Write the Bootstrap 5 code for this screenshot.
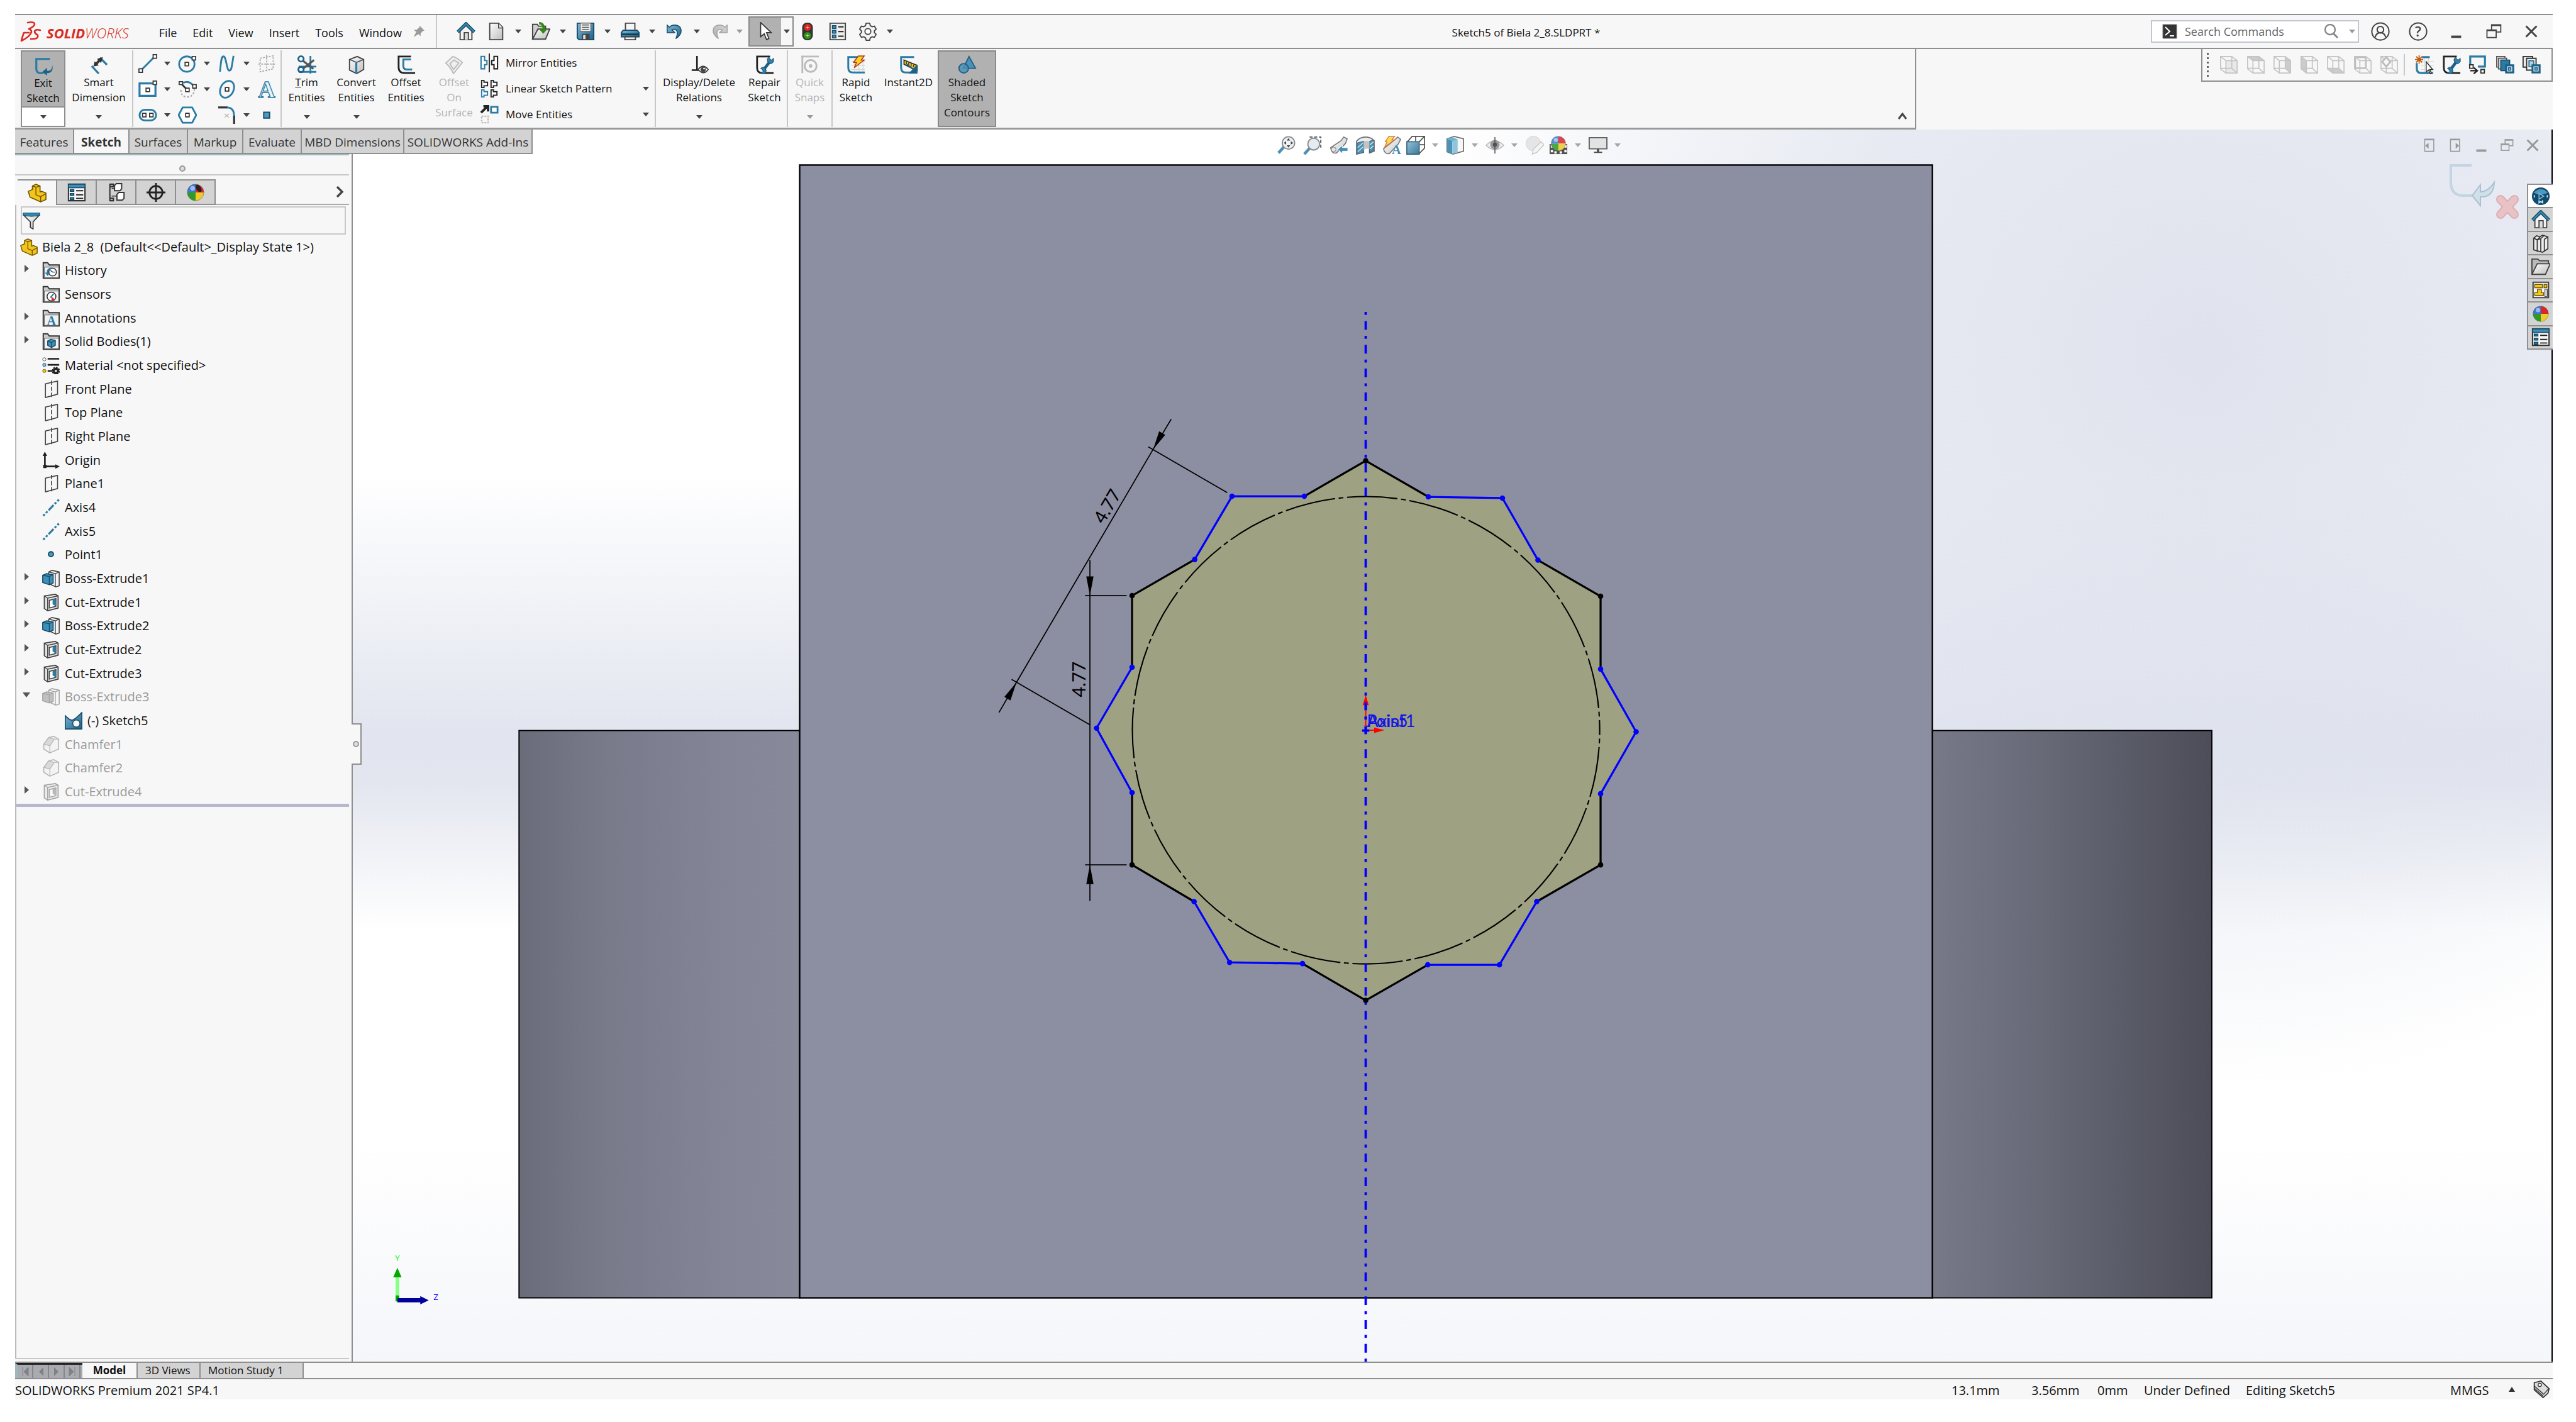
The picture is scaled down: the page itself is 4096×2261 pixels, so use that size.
<!DOCTYPE html>
<html lang="en">
<head>
<meta charset="utf-8">
<meta name="viewport" content="width=device-width, initial-scale=1">
<title>Sketch5 of Biela 2_8.SLDPRT *</title>
<link href="https://cdn.jsdelivr.net/npm/bootstrap@5.3.0/dist/css/bootstrap.min.css" rel="stylesheet">
<style>
:root{--line:#8f8f8f;--face:#f7f7f7;--tab:#d3d3d3;--ink:#111;--teal:#9db8bd}
body{font-family:"Open Sans","Noto Sans",sans-serif;font-size:18px;line-height:24px;color:var(--ink);background:#fff;padding:22px 37px 36px 24px}
button{font:inherit;color:inherit;background:none;border:0;padding:0}
svg{display:block;flex:none}
.ic{width:30px;height:30px}
.ic28{width:28px;height:28px}
.dn{display:block;width:0;height:0;border:5px solid transparent;border-top:6px solid #444;border-bottom:0}
.dim{color:#b4b4b4}
.dim .dn{border-top-color:#999}
.off{filter:grayscale(1);opacity:.45}
.vr1{width:2px;background:#c8c8c8;align-self:stretch}

.titlebar{height:56px;background:var(--face);border-top:2px solid var(--line);border-bottom:2px solid var(--line)}
.brand{font-size:22px;font-style:italic;color:#da2b23}
.brand b{font-weight:700}.brand span{font-weight:300}
.menus{gap:25px}
.menus a{color:var(--ink);text-decoration:none}
.qbtn{width:36px;height:48px}
.qhome{margin-right:12px}
.qdrop{width:35px;height:48px}
.qlast{width:28px}
.pick{height:48px;border:2px solid #8a8a8a}
.pick .on{width:50px;background:#b1b1b1}
.pick .dd{width:18px}
.docname{font-size:17px}
.find{width:331px;height:36px;border:2px solid #c3c5d2;background:#fff}
.find input{font-size:18px;border:0;outline:0;min-width:0;color:#555;background:none}
.find input::placeholder{color:#666;opacity:1}
.wbtn{width:60px;height:48px}

.ribbonrow{height:128px;background:var(--face)}
.ribbon{width:3023px;border-right:2px solid var(--line);border-bottom:3px solid #999;font-size:17px;padding:2px 0 1px 9px}
.big{padding-top:8px;position:relative;line-height:24px}
.big .dn{position:absolute;left:50%;bottom:13px;margin-left:-5px}
.big .ic{margin-bottom:1px}
.w71{width:71px}.w69{width:69px}.w74{width:74px}.w79{width:79px}.w93{width:93px}.w106{width:106px}.w137{width:137px}
.split{border:2px solid #8f8f8f;background:#fff;padding:0}
.split .up{background:#b1b1b1;height:89px;border-bottom:2px solid #8f8f8f;padding-top:6px}
.pressed{background:#b1b1b1;border:2px solid #8a8a8a;padding-top:6px}
.tools{display:grid;grid-template-columns:31px 32px 31px 32px 31px 32px 31px;grid-auto-rows:41px;place-items:center;padding:0 7px}
.ents{width:282px;padding-left:4px}
.ents button{height:41px;gap:11px;text-align:left}
.ents .dn{margin-right:9px}
.viewbar{width:559px;height:52px;border:2px solid var(--line);border-top:0;padding:0 17px 0 6px}
.skgroup{width:200px}
.grip{width:5px;height:42px;background:radial-gradient(circle,#666 2px,transparent 2px) 0 0/5px 7px}

.side{width:537px;z-index:2}
.cmtabs{height:39px;width:max-content;font-size:19px;border-bottom:2px solid var(--line)}
.cmtabs button{background:var(--tab);border-right:2px solid var(--line);color:#333;white-space:nowrap;padding-top:3px}
.cmtabs .cur{background:var(--face);font-weight:700}
.t88{width:88px}.t94{width:94px}.t93{width:93px}.t163{width:163px}.t204{width:204px}
.panel{background:var(--face);border-right:2px solid var(--line)}
.ptop{height:34px;margin-right:4px;border-bottom:2px solid #c8c8c8;border-top:2px solid var(--teal)}
.knob{width:10px;height:10px;border-radius:50%;border:2px solid #999;background:#ddd}
.ptabs{height:41px;margin:6px 4px 0 4px;border-bottom:2px solid #aaa}
.ptabs .pt{width:63px;height:41px;background:var(--tab);border:2px solid var(--line);border-left:0}
.ptabs .cur{background:var(--face);border-bottom:0}
.tbody1{border-left:2px solid #bbb;margin-right:4px}
.filter{height:45px;margin:2px 5px 0 7px;border:2px solid #c8c8c8;padding-left:1px}
.filter input{border:0;outline:0;background:none;min-width:0}
.tree{display:grid;grid-auto-rows:1fr;height:909px;margin:1px 0 0;font-size:20px;border-bottom:5px solid #b7b8cf}
.tree li{display:flex;align-items:center;gap:8px;padding-left:9px;white-space:pre}
.tree li.root{padding-left:6px;gap:7px}
.tree li.kid{padding-left:77px}
.tw{width:24px;height:12px;margin-top:-6px}
.tree .gone{color:#999}
.pfoot{height:6px;border-top:2px solid #c8c8c8;margin-right:4px}

.stage{background:
 radial-gradient(ellipse 36% 60% at 84% 18%,rgba(220,224,235,.9),rgba(222,226,237,.7) 50%,rgba(225,229,239,0)),
 linear-gradient(#fff 0,#fff 28%,#e2e5ef 49%,#e3e6ef 53%,#fff 65%,#fff 82%,#f5f6fa 100%);
 border-right:2px solid #000}
.stage>svg.scene{position:absolute;inset:0;width:100%;height:100%}
.hud{position:absolute;top:10px;left:0;right:0;opacity:.85}
.hud .hd{width:33px;height:30px}
.hud .dn{border-top-color:#999}
.docbtns{position:absolute;top:10px;right:15px;gap:11px}
.docbtns,.wins{color:#444}
.docbtns{color:#999}
.corner{position:absolute;top:54px;right:49px}
.taskpane{position:absolute;top:86px;right:-2px;width:41px;height:264px;border:2px solid var(--line);border-right:0}
.taskpane button{background:var(--tab);border-bottom:2px solid var(--line);flex:1}
.taskpane button:first-child{background:#fff}
.taskpane button:last-child{border-bottom:0}
.pull{position:absolute;top:944px;left:-2px;width:16px;height:66px;background:var(--face);border:2px solid var(--line);border-left:0;z-index:3}

.btabs{height:28px;background:var(--face);border-top:2px solid var(--line);border-bottom:2px solid var(--line);font-size:17px;line-height:22px}
.vcr{background:#a9abb1;border-top:3px solid #222;border-left:4px solid var(--teal);width:107px}
.vcr button{width:25px;border-right:2px solid #85878c}
.bt{background:var(--tab);border-right:2px solid var(--line);text-align:left}
.bt.cur{background:var(--face);font-weight:700;text-align:center}
.b100{width:100px}.b164{width:164px}
.status{height:32px;background:var(--face);font-size:20px;line-height:35px;white-space:nowrap}
.s127{width:127px}.s105{width:105px}.s162{width:162px}.s325{width:325px}.s80{width:80px}
</style>
</head>
<body class="d-flex flex-column min-vh-100">

<svg width="0" height="0" class="position-absolute" aria-hidden="true">
<defs>
<linearGradient id="gb" x1="0" y1="0" x2="1" y2="1"><stop offset="0" stop-color="#7db9d6"/><stop offset="1" stop-color="#1d6288"/></linearGradient>
<linearGradient id="gg" x1="0" y1="0" x2="1" y2="1"><stop offset="0" stop-color="#fff"/><stop offset="1" stop-color="#bdbdbd"/></linearGradient>
<linearGradient id="gl" x1="0" y1="0" x2="1" y2="0"><stop offset="0" stop-color="#6a6c7a"/><stop offset=".3" stop-color="#787a8a"/><stop offset=".7" stop-color="#838597"/><stop offset="1" stop-color="#888a9c"/></linearGradient>
<linearGradient id="gr" x1="0" y1="0" x2="1" y2="0"><stop offset="0" stop-color="#777989"/><stop offset=".4" stop-color="#676977"/><stop offset="1" stop-color="#4c4d58"/></linearGradient>

<symbol id="home" viewBox="0 0 32 32"><path d="M6 15v15h20V15L16 6z" fill="#f2f2f2" stroke="#444" stroke-width="2"/><path d="M13 30V18h7v12" fill="#ddd" stroke="#444" stroke-width="2"/><path d="M2 17L16 3l14 14" fill="none" stroke="#174a66" stroke-width="5.5"/><path d="M2 17L16 3l14 14" fill="none" stroke="#3a8cb5" stroke-width="2.5"/></symbol>
<symbol id="new" viewBox="0 0 32 32"><path d="M5 2h15l7 7v21H5z" fill="url(#gg)" stroke="#444" stroke-width="2"/><path d="M20 2v8h7" fill="#eee" stroke="#444" stroke-width="1.6"/></symbol>
<symbol id="open" viewBox="0 0 32 32"><path d="M2 29V4h8l2 3h12v5" fill="#d0d0d0" stroke="#444" stroke-width="2"/><path d="M2 29l9-17h20l-7 17z" fill="url(#gg)" stroke="#444" stroke-width="2"/><path d="M13 2c6 0 8 4 8 11" fill="none" stroke="#338a12" stroke-width="4"/><path d="M13 12h14l-7 8z" fill="#338a12"/></symbol>
<symbol id="save" viewBox="0 0 32 32"><path d="M2 2h28v28H5l-3-3z" fill="url(#gb)" stroke="#174a66" stroke-width="2"/><path d="M7 2h18v14H7z" fill="#eee" stroke="#444"/><path d="M10 5h12M10 9h12M10 13h12" stroke="#555" stroke-width="1.6"/><path d="M10 20h13v10H10z" fill="#444"/><path d="M12 22h4v7h-4z" fill="#ddd"/></symbol>
<symbol id="print" viewBox="0 0 32 32"><path d="M8 2h16v13H8z" fill="#f5f5f5" stroke="#444" stroke-width="2"/><path d="M4 14h24l3 4v7H1v-7z" fill="url(#gb)" stroke="#174a66" stroke-width="2"/><path d="M2 21h28" stroke="#0f3d57" stroke-width="3"/><path d="M7 25h18v5H7z" fill="#eee" stroke="#444" stroke-width="2"/></symbol>
<symbol id="undo" viewBox="0 0 32 32"><path d="M3 5v13h13l-5-5c8-2 12 2 7 15 12-8 12-22-2-23-5 0-7 1-9 4z" fill="url(#gb)" stroke="#174a66" stroke-width="1.6" stroke-linejoin="round"/></symbol>
<symbol id="cursor" viewBox="0 0 32 32"><path d="M8 1v24l6-5 4 10 4-2-4-10h8z" fill="#fff" stroke="#333" stroke-width="1.8"/></symbol>
<symbol id="traffic" viewBox="0 0 32 32"><rect x="7" y="1" width="18" height="30" rx="8" fill="#333"/><circle cx="16" cy="9" r="6" fill="#d9251d"/><circle cx="16" cy="23" r="6" fill="#2f9416"/><path d="M13 9h6M16 6v6M13 23h6M16 20v6" stroke="#fff" stroke-opacity=".6"/></symbol>
<symbol id="list" viewBox="0 0 32 32"><path d="M3 2h26v28H3z" fill="#eee" stroke="#444" stroke-width="2"/><path d="M7 6h6v5H7zM7 14h6v5H7zM7 22h6v5H7z" fill="#3e8fb8" stroke="#174a66" stroke-width="1.6"/><path d="M17 8h9M17 16h9M17 24h9" stroke="#333" stroke-width="2.4"/></symbol>
<symbol id="gear" viewBox="0 0 32 32"><path d="M13 2h6l1 4 3 2 4-1 3 5-3 3v3l3 3-3 5-4-1-3 2-1 4h-6l-1-4-3-2-4 1-3-5 3-3v-3l-3-3 3-5 4 1 3-2z" fill="#f4f4f4" stroke="#444" stroke-width="2" stroke-linejoin="round"/><circle cx="16" cy="16" r="5" fill="#fff" stroke="#444" stroke-width="2"/></symbol>
<symbol id="pin" viewBox="0 0 32 32"><path d="M18 3l11 11-4 1-5 6 0 6-5-5L4 29l6-12-6-5 7 0 6-5z" fill="#9a9a9a"/></symbol>
<symbol id="exit" viewBox="0 0 32 32"><path d="M27 4H4v17q0 7 8 7h4" fill="none" stroke="#2a7ba5" stroke-width="3.4"/><path d="M31 14c0 10-5 10-9 10v-5l-8 7 8 6v-4c8 0 11-5 9-14z" fill="#1d6288"/></symbol>
<symbol id="dimn" viewBox="0 0 32 32"><path d="M18 4l12 12M4 18l12 13" stroke="#2a7ba5" stroke-width="3.4"/><path d="M7 19l2-9 2 2 4-4-2-2 10-3-3 10-2-2-4 4 2 2z" fill="#333"/></symbol>
<symbol id="ln" viewBox="0 0 32 32"><path d="M4 28L28 4" stroke="#2a7ba5" stroke-width="3.2"/><path d="M1 25h6v6H1zM25 1h6v6h-6z" fill="#fff" stroke="#333" stroke-width="1.8"/></symbol>
<symbol id="circ" viewBox="0 0 32 32"><circle cx="15" cy="17" r="13" fill="none" stroke="#2a7ba5" stroke-width="3"/><path d="M12 14h6v6h-6zM24 4h6v6h-6z" fill="#fff" stroke="#333" stroke-width="1.8"/></symbol>
<symbol id="spl" viewBox="0 0 32 32"><path d="M4 30C6 12 6 4 10 4c5 0 5 24 10 24 4 0 4-8 7-25" fill="none" stroke="#2a7ba5" stroke-width="3"/></symbol>
<symbol id="pdash" viewBox="0 0 32 32"><path d="M5 7L27 3v22L5 30zM16 1v30M2 17h28" fill="none" stroke="#aaa" stroke-width="1.8" stroke-dasharray="3 2"/></symbol>
<symbol id="rct" viewBox="0 0 32 32"><path d="M2 6h27v21H2z" fill="#fff" stroke="#2a7ba5" stroke-width="3.4"/><path d="M13 14h6v6h-6zM25 2h6v6h-6z" fill="#fff" stroke="#333" stroke-width="1.8"/></symbol>
<symbol id="arc" viewBox="0 0 32 32"><path d="M9 5q10-5 18 6" fill="none" stroke="#2a7ba5" stroke-width="3"/><path d="M5 17q0 12 11 12t12-14" fill="none" stroke="#aaa" stroke-width="2.4" stroke-dasharray="3 3"/><path d="M5 6l11 11" stroke="#333" stroke-width="3"/><path d="M2 3h6v5H2zM13 14h6v6h-6zM25 8h6v6h-6z" fill="#fff" stroke="#333" stroke-width="1.8"/></symbol>
<symbol id="ell" viewBox="0 0 32 32"><ellipse cx="16" cy="16" rx="11" ry="15" transform="rotate(28 16 16)" fill="none" stroke="#2a7ba5" stroke-width="3"/><path d="M13 13h6v6h-6z" fill="#fff" stroke="#333" stroke-width="1.8"/></symbol>
<symbol id="txt" viewBox="0 0 32 32"><text x="16" y="30" text-anchor="middle" font-family="Liberation Serif,serif" font-weight="700" font-size="40" fill="#e8f2f8" stroke="#2a7ba5" stroke-width="1.4">A</text></symbol>
<symbol id="slot" viewBox="0 0 32 32"><rect x="2" y="7" width="28" height="18" rx="9" fill="#fff" stroke="#2a7ba5" stroke-width="3.2"/><path d="M7 13h6v6H7zM19 13h6v6h-6z" fill="#fff" stroke="#333" stroke-width="1.8"/></symbol>
<symbol id="poly" viewBox="0 0 32 32"><path d="M8 3h16l7 13-7 13H8L1 16z" fill="#fff" stroke="#2a7ba5" stroke-width="3"/><path d="M13 13h6v6h-6z" fill="#fff" stroke="#333" stroke-width="1.8"/></symbol>
<symbol id="fil" viewBox="0 0 32 32"><path d="M1 3h16" stroke="#333" stroke-width="3.4"/><path d="M16 3q12 0 12 15" fill="none" stroke="#2a7ba5" stroke-width="3"/><path d="M28 17v14" stroke="#333" stroke-width="3.4"/><path d="M12 14l7 6M19 14l-7 6" stroke="#bbb" stroke-width="1.6"/></symbol>
<symbol id="pnt" viewBox="0 0 32 32"><path d="M11 11h10v10H11z" fill="#4a9ac2" stroke="#174a66" stroke-width="2"/></symbol>
<symbol id="trim" viewBox="0 0 32 32"><path d="M22 1v30M2 28h30M2 19h30" stroke="#2a7ba5" stroke-width="3"/><path d="M9 9l18 14M9 23L28 8" stroke="#555" stroke-width="3.4"/><circle cx="6" cy="6" r="4.5" fill="none" stroke="#1d6288" stroke-width="3"/><circle cx="6" cy="24" r="4.5" fill="none" stroke="#1d6288" stroke-width="3"/></symbol>
<symbol id="conv" viewBox="0 0 32 32"><path d="M4 7l13-5 11 5v17l-12 7-12-6z" fill="url(#gg)" stroke="#444" stroke-width="2"/><path d="M4 7l12 5 12-5" fill="none" stroke="#444" stroke-width="1.6"/><path d="M15.500 12v19" stroke="#2a7ba5" stroke-width="3.4"/></symbol>
<symbol id="offs" viewBox="0 0 32 32"><path d="M24 2H3v18q0 10 10 10h18" fill="none" stroke="#222" stroke-width="3"/><path d="M24 7H11v11q0 6 6 6h9" fill="none" stroke="#2a7ba5" stroke-width="3.2"/></symbol>
<symbol id="osrf" viewBox="0 0 32 32"><path d="M2 13L14 2q7 2 16 10L15 31Q10 20 2 13zM9 14l7-6 8 5-9 11z" fill="#f0f0f0" stroke="#bbb" stroke-width="2"/></symbol>
<symbol id="mir" viewBox="0 0 32 32"><path d="M16 0v32" stroke="#222" stroke-width="2"/><path d="M2 5h6v7h4v7H8v7H2z" fill="#fff" stroke="#2a7ba5" stroke-width="2.2"/><path d="M30 5h-6v7h-4v7h4v7h6z" fill="#fff" stroke="#222" stroke-width="2.2"/></symbol>
<symbol id="pat" viewBox="0 0 32 32"><g fill="#fff" stroke="#222" stroke-width="2"><path d="M3 2h4v3h6v6H7v3H3z"/><path d="M19 2h4v3h6v6h-6v3h-4zM19 18h4v3h6v6h-6v3h-4z"/></g><path d="M3 18h4v3h6v6H7v3H3z" fill="#fff" stroke="#2a7ba5" stroke-width="2"/></symbol>
<symbol id="mov" viewBox="0 0 32 32"><path d="M2 13L12 3M6 2h8v9" fill="none" stroke="#222" stroke-width="4"/><path d="M19 3h11v10H19z" fill="#fff" stroke="#2a7ba5" stroke-width="3"/><path d="M3 19h11v11H3z" fill="none" stroke="#bbb" stroke-width="2.4" stroke-dasharray="3 2"/></symbol>
<symbol id="rel" viewBox="0 0 32 32"><path d="M12 1v24M3 25h15" stroke="#222" stroke-width="2.8"/><path d="M14 24q8-11 17 0-8 11-17 0z" fill="#fff" stroke="#333" stroke-width="1.8"/><circle cx="22.500" cy="24" r="4.500" fill="#444"/><circle cx="24" cy="22.500" r="1.500" fill="#fff"/></symbol>
<symbol id="rep" viewBox="0 0 32 32"><path d="M25 2H3v19q0 9 9 9h19" fill="none" stroke="#222" stroke-width="3"/><path d="M13 26l12-16" stroke="#1d5f86" stroke-width="5"/><path d="M23 3q-5 4-1 9t9-1V5l-4 3-2-2zM9 22q5-4 8 0t0 8q-4 3-8 0l4-2 0-3z" fill="#2f7fa9" stroke="#174a66"/></symbol>
<symbol id="snap" viewBox="0 0 32 32"><path d="M1 2h30M3 2v28" stroke="#bbb" stroke-width="3"/><circle cx="17" cy="18" r="10" fill="none" stroke="#bbb" stroke-width="3"/><circle cx="17" cy="18" r="3" fill="#bbb"/></symbol>
<symbol id="rap" viewBox="0 0 32 32"><path d="M8 10h23M8 17h23M8 24h23M14 6v24M21 6v24M28 6v24" stroke="#d5d5d5" stroke-width="1.4"/><path d="M25 3H3v18q0 8 8 8h20" fill="none" stroke="#2a7ba5" stroke-width="3.200"/><path d="M20 1h10l-5 7h5L13 21l4-9h-5z" fill="#ffcf2a" stroke="#b2390e" stroke-width="1.600"/></symbol>
<symbol id="ins" viewBox="0 0 32 32"><path d="M25 3H3v18q0 8 8 8h20" fill="none" stroke="#2a7ba5" stroke-width="3.200"/><path d="M8 8l22 9v9L8 15z" fill="#ffd21f" stroke="#333" stroke-width="2"/><path d="M12 11v4M16 12v5M20 14v5M24 16v4" stroke="#333" stroke-width="1.600"/><path d="M12 14l16 14M29 18v12H18z" fill="#1d6288" stroke="#1d6288" stroke-width="2"/></symbol>
<symbol id="shd" viewBox="0 0 32 32"><path d="M19 2l11 20H9z" fill="#4a92b8" stroke="#1d5f86" stroke-width="2"/><circle cx="10" cy="22" r="8" fill="#4a92b8" fill-opacity=".8" stroke="#1d5f86" stroke-width="2"/></symbol>

<symbol id="cubew" viewBox="0 0 32 32"><path d="M2 2h19l9 7v21H11L2 23zM11 9h19M11 9v21M11 9L2 2M21 2v20M2 22h19l9 8" fill="none" stroke="#c4c4c4" stroke-width="1.800"/></symbol>
<symbol id="newsk" viewBox="0 0 32 32"><path d="M10 10h22M10 17h22M10 24h22M16 4v26M23 4v26" stroke="#ddd" stroke-width="1.400"/><path d="M12 3h13M3 13v9q0 8 8 8h20" fill="none" stroke="#2a7ba5" stroke-width="3.400"/><path d="M7 0v14M0 7h14M2 2l10 10M12 2L2 12" stroke="#c25a08" stroke-width="2"/><path d="M19 11v17l4-3 3 6 2-1-3-6h5z" fill="#fff" stroke="#333" stroke-width="1.600"/></symbol>
<symbol id="sk2" viewBox="0 0 32 32"><path d="M3 17V2h25v17H16" fill="none" stroke="#2a7ba5" stroke-width="3.400"/><path d="M2 16h6v6H2zM21 24h6v6h-6z" fill="#fff" stroke="#333" stroke-width="2"/><path d="M3 26h10M9 21l6 5-6 5" stroke="#222" stroke-width="2.600" fill="none"/></symbol>
<symbol id="stk" viewBox="0 0 32 32"><path d="M2 2h14v18H2z" fill="#eee" stroke="#555" stroke-width="1.800"/><path d="M5 5h14v18H5z" fill="#ddd" stroke="#555" stroke-width="1.800"/><path d="M9 8h15v18H9z" fill="#2a7ba5" stroke="#174a66" stroke-width="1.800"/><path d="M18 17h12v12H18z" fill="#fff" stroke="#1d6288" stroke-width="3.400"/><path d="M22 21h4v4h-4z" fill="none" stroke="#1d6288" stroke-width="2"/></symbol>
<symbol id="stk2" viewBox="0 0 32 32"><path d="M2 2h16v18H2z" fill="#eee" stroke="#333" stroke-width="2"/><path d="M8 5h16v20H8z" fill="#f7f7f7" stroke="#333" stroke-width="2"/><path d="M12 9h8v10h-8z" fill="#ccc" stroke="#2a7ba5" stroke-width="2"/><path d="M18 17h12v12H18z" fill="#fff" stroke="#1d6288" stroke-width="3.400"/><path d="M22 21h4v4h-4z" fill="none" stroke="#1d6288" stroke-width="2"/></symbol>

<symbol id="zfit" viewBox="0 0 32 32"><path d="M13 18L3 29" stroke="#2f7fa9" stroke-width="5"/><circle cx="20" cy="12" r="10.500" fill="#eef2f4" stroke="#777" stroke-width="2"/><path d="M20 4l3 4h-6zM20 20l3-4h-6zM12 12l4-3v6zM28 12l-4-3v6z" fill="#222"/></symbol>
<symbol id="zarea" viewBox="0 0 32 32"><path d="M11 2h19v19" fill="none" stroke="#333" stroke-width="2" stroke-dasharray="5 3"/><path d="M12 20L2 31" stroke="#2f7fa9" stroke-width="5"/><circle cx="18" cy="14" r="10" fill="#dfe9ef" stroke="#777" stroke-width="2"/></symbol>
<symbol id="prev" viewBox="0 0 32 32"><path d="M2 20L20 8l4-6 6 3-3 8L12 29q-8 2-10-9z" fill="url(#gg)" stroke="#666" stroke-width="1.800"/><circle cx="7" cy="23" r="4" fill="#ddd" stroke="#666"/><path d="M14 23l8-7v4h9v6h-9v4z" fill="#2a7ba5" stroke="#fff"/></symbol>
<symbol id="sect" viewBox="0 0 32 32"><path d="M1 9q6-7 15-7t15 6v18l-8 3V12q-5-3-10 0v16L1 31z" fill="#e9e9e9" stroke="#555" stroke-width="1.800"/><path d="M2 12l11-3v19L2 31zM23 9l7-2v18l-7 3z" fill="#2f7fa9" stroke="#174a66"/><path d="M13 10q5-3 10 0v13q-5-3-10 1z" fill="#b9b9b9"/><path d="M3 20l9-8M3 27l9-8M24 15l6-5M24 22l6-5" stroke="#bfe0f0" stroke-width="1.600"/></symbol>
<symbol id="dyn" viewBox="0 0 32 32"><path d="M2 22L22 6l4-4 5 4-4 8L12 30q-8 2-10-8z" fill="url(#gg)" stroke="#666" stroke-width="1.800"/><path d="M11 1h10l-5 6h4L4 19l4-9H5z" fill="#ffd642" stroke="#d2691e" stroke-width="1.500"/><text x="24" y="31" text-anchor="middle" font-family="Liberation Serif,serif" font-weight="700" font-size="22" fill="#2a7ba5">A</text></symbol>
<symbol id="orient" viewBox="0 0 32 32"><path d="M2 10L10 1h21v20l-9 9M31 1l-9 9M16 1v8M31 15h-8" fill="none" stroke="#333" stroke-width="1.800"/><path d="M1 10h21v21H1z" fill="url(#gb)" stroke="#174a66" stroke-width="1.800"/></symbol>
<symbol id="disp" viewBox="0 0 32 32"><path d="M2 5l12-4 16 4v21l-18 5-10-4z" fill="#f6f6f6" stroke="#555" stroke-width="1.800"/><path d="M2 5l9 3v23l-9-4z" fill="#2f7fa9"/><path d="M11 8l9-2v22l-9 3z" fill="#7dbbd8"/><path d="M2 5l9-3 9 4-9 3z" fill="#59a5c8"/></symbol>
<symbol id="eye" viewBox="0 0 32 32"><path d="M1 16Q16 1 31 16 16 31 1 16z" fill="#ececec" stroke="#aaa" stroke-width="1.600"/><circle cx="16" cy="15" r="8" fill="#888"/><circle cx="16" cy="15" r="3.500" fill="#333"/><path d="M16 2v28" stroke="#333" stroke-width="1.600"/></symbol>
<symbol id="appr" viewBox="0 0 32 32"><circle cx="14" cy="13" r="12.500" fill="#e2e2e2" stroke="#ccc"/><path d="M12 31l2-8L27 10l5 5-12 13z" fill="#f3f3f3" stroke="#c4c4c4" stroke-width="1.600"/></symbol>
<symbol id="ball" viewBox="0 0 32 32"><path d="M16 16V2a13 13 0 0 0-14 14z" fill="#3b78d6"/><path d="M16 16h14A14 14 0 0 0 16 2z" fill="#d8262b"/><path d="M16 16H2a14 14 0 0 0 14 14z" fill="#2f9a25"/><path d="M16 16v14a14 14 0 0 0 14-14z" fill="#f0c92a"/><circle cx="11" cy="9" r="4" fill="#fff" fill-opacity=".5"/><circle cx="16" cy="16" r="14" fill="none" stroke="#555" stroke-opacity=".5"/></symbol>
<symbol id="scn" viewBox="0 0 32 32"><path d="M1 14h30v17H1z" fill="#333"/><path d="M3 16h4v4H3zM3 24h4v4H3zM26 16h4v4h-4zM26 24h4v4h-4zM9 26h4v4H9zM18 26h4v4h-4z" fill="#fff"/><use href="#ball" x="2" y="-1" width="28" height="28"/></symbol>
<symbol id="mon" viewBox="0 0 32 32"><path d="M1 3h30v19H1z" fill="#e0e0e0" stroke="#444" stroke-width="2"/><path d="M14 22h4v5h5v2H9v-2h5z" fill="#333"/></symbol>

<symbol id="expr" viewBox="0 0 32 32"><circle cx="16" cy="16" r="15" fill="#124a6e"/><path d="M4 10q12-12 24 0-12 6-24 0z" fill="#4d97c0"/><path d="M13 11l8 5-8 5z" fill="none" stroke="#7fc1e2" stroke-width="1.600"/><path d="M13 23v4l3-2 3 2v-4M5 14v4M27 14v4" stroke="#d5ecf7" stroke-width="1.800" fill="none"/></symbol>
<symbol id="books" viewBox="0 0 32 32"><path d="M4 7l5-4 5 2 5-3 9 3v20l-9 6-15-4z" fill="#eee" stroke="#333" stroke-width="1.800"/><path d="M4 7l6 3v20M10 10l5-5M16 8v22M16 8l5-5M22 9v20M22 9l6-4M16 8l-6 2" fill="none" stroke="#333" stroke-width="1.800"/></symbol>
<symbol id="fold" viewBox="0 0 32 32"><path d="M1 29V3h10l3 3h15v6" fill="#bbb" stroke="#444" stroke-width="2"/><path d="M1 29l9-18h22l-8 18z" fill="url(#gg)" stroke="#444" stroke-width="2"/></symbol>
<symbol id="pal" viewBox="0 0 32 32"><path d="M2 2h28v28H2z" fill="#f4f4f4" stroke="#444" stroke-width="2.400"/><path d="M5 6h14v6H5zM22 6h5v6h-5zM10 15h7v6h4v5H5v-5h5z" fill="#f5c816" stroke="#6e5500" stroke-width="1.600"/><path d="M23 15h5v13h-5z" fill="#ccc" stroke="#444"/></symbol>
<symbol id="prop" viewBox="0 0 32 32"><path d="M2 2h28v28H2z" fill="#f7f7f7" stroke="#333" stroke-width="2.200"/><path d="M2 2h28v6H2z" fill="#3e8fb8" stroke="#174a66" stroke-width="1.600"/><path d="M5 11h6v3H5zM5 18h6v3H5zM5 25h6v3H5z" fill="#3e8fb8" stroke="#174a66" stroke-width="1.800"/><path d="M15 13h12M15 20h12M15 26h12" stroke="#222" stroke-width="2"/></symbol>

<symbol id="part" viewBox="0 0 32 32"><path d="M1 13l7-3V4l6-3 7 3v10l3-1 7 3v11l-9 4L4 23z" fill="#f3c51c" stroke="#6e5500" stroke-width="1.700" stroke-linejoin="round"/><path d="M8 4l6 2 7-2M14 6v13l8 3 9-5M22 22v9" fill="none" stroke="#6e5500" stroke-width="1.500"/></symbol>
<symbol id="cfg" viewBox="0 0 32 32"><path d="M5 1v30M5 2h6v4H5M5 26h6v4H5" fill="none" stroke="#333" stroke-width="2.200"/><path d="M8 9h6M8 22h8" stroke="#333" stroke-width="1.600"/><path d="M13 4l3-3h9v9l-3 3h-9zM17 19l3-3h9v10l-3 3h-9z" fill="#fff" stroke="#333" stroke-width="2"/></symbol>
<symbol id="targ" viewBox="0 0 32 32"><circle cx="16" cy="16" r="11" fill="none" stroke="#222" stroke-width="3"/><path d="M16 0v32M0 16h32" stroke="#222" stroke-width="3"/></symbol>
<symbol id="fun" viewBox="0 0 32 32"><path d="M1 5q15 5 30 0L19 18v13l-5-3V18z" fill="url(#gg)" stroke="#333" stroke-width="1.800"/><path d="M1 2h30v4q-15 4-30 0z" fill="#2f8ab5" stroke="#174a66" stroke-width="1.400"/></symbol>
<symbol id="fbox" viewBox="0 0 32 32"><path d="M2 30V2h8l3 4h18v24z" fill="#ccc" stroke="#333" stroke-width="2.200"/><path d="M4 10h26v19H4z" fill="#f2f2f2" stroke="#555"/></symbol>
<symbol id="hist" viewBox="0 0 32 32"><use href="#fbox"/><circle cx="19" cy="19" r="7" fill="#fff" stroke="#333" stroke-width="1.800"/><path d="M19 19l-4-3M19 19h5" stroke="#333" stroke-width="1.500"/><path d="M17 12q-8 1-7 9" stroke="#2a7ba5" stroke-width="3" fill="none"/><path d="M5 20h10l-5 6z" fill="#2a7ba5"/></symbol>
<symbol id="sens" viewBox="0 0 32 32"><use href="#fbox"/><circle cx="17" cy="20" r="8" fill="#fff" stroke="#333" stroke-width="1.800"/><path d="M17 20l6 5-6 3z" fill="#e0331b"/><path d="M15 22l6-7" stroke="#2a7ba5" stroke-width="2.400"/></symbol>
<symbol id="anno" viewBox="0 0 32 32"><use href="#fbox"/><text x="17" y="28" text-anchor="middle" font-family="Liberation Serif,serif" font-weight="700" font-size="23" fill="#2a7ba5">A</text></symbol>
<symbol id="sol" viewBox="0 0 32 32"><use href="#fbox"/><path d="M10 15l6-3 8 2v9l-7 4-7-4z" fill="#3e8fb8" stroke="#174a66" stroke-width="1.600"/><path d="M10 15l7 3v9M17 18l7-4" fill="none" stroke="#174a66" stroke-width="1.500"/></symbol>
<symbol id="matl" viewBox="0 0 32 32"><path d="M10 4h21M10 15h21M10 26h9" stroke="#222" stroke-width="3"/><circle cx="4" cy="5" r="3" fill="#fff" stroke="#444"/><circle cx="4" cy="15" r="3" fill="#7cc3e6" stroke="#174a66"/><circle cx="4" cy="26" r="3" fill="#f3c51c" stroke="#6e5500"/><circle cx="25" cy="26" r="4" fill="none" stroke="#222" stroke-width="4"/><circle cx="25" cy="26" r="6.500" fill="none" stroke="#222" stroke-width="2" stroke-dasharray="3 2"/></symbol>
<symbol id="pln" viewBox="0 0 32 32"><path d="M6 6l22-5v24L6 31z" fill="none" stroke="#444" stroke-width="1.800"/><path d="M17 0v32" stroke="#444" stroke-width="1.800" stroke-dasharray="8 3"/></symbol>
<symbol id="orig" viewBox="0 0 32 32"><path d="M5 4v23h24" fill="none" stroke="#222" stroke-width="3"/><path d="M5 0l4 8H1zM32 27l-8-4v8zM2 24h6v6H2z" fill="#222"/></symbol>
<symbol id="axis" viewBox="0 0 32 32"><path d="M2 31L31 1" stroke="#2a7ba5" stroke-width="3.600" stroke-dasharray="4 3 4 3 13 3 4 3"/></symbol>
<symbol id="pt1" viewBox="0 0 32 32"><circle cx="16" cy="15" r="4.500" fill="#4a9ac2" stroke="#174a66" stroke-width="2.200"/></symbol>
<symbol id="boss" viewBox="0 0 32 32"><path d="M12 4l6-3 13 3v25l-6 2-13-6z" fill="#f5f5f5" stroke="#444" stroke-width="1.800"/><path d="M12 4l12 3v24M24 7l7-3" fill="none" stroke="#444" stroke-width="1.500"/><path d="M1 10l7-3 12 2v15l-7 3-12-4z" fill="#3e8fb8" stroke="#174a66" stroke-width="1.800"/><path d="M1 10l12 2v15M13 12l7-3" fill="none" stroke="#174a66" stroke-width="1.500"/></symbol>
<symbol id="cut" viewBox="0 0 32 32"><path d="M4 4l20-3 5 3v22L10 31l-6-4z" fill="#e3e3e3" stroke="#444" stroke-width="2"/><path d="M10 8l19-4M10 8v23M4 4l6 4" stroke="#444" stroke-width="1.600" fill="none"/><path d="M13 12l12-3v14l-12 3z" fill="#fff" stroke="#444" stroke-width="1.800"/><path d="M19 11l6-1v13l-6-4z" fill="#2a7ba5"/></symbol>
<symbol id="cham" viewBox="0 0 32 32"><path d="M3 15L12 3l9-2 9 5v18l-16 7-11-7z" fill="#f0f0f0" stroke="#666" stroke-width="1.800"/><path d="M3 15L12 3l10 3-8 12z" fill="#b5b5b5" stroke="#666" stroke-width="1.400"/><path d="M14 18v13M22 6l8 0" stroke="#666" stroke-width="1.400"/></symbol>
<symbol id="skt" viewBox="0 0 32 32"><path d="M1 7q8 8 12 8T31 1v30H1z" fill="url(#gb)" stroke="#174a66" stroke-width="1.800"/><circle cx="21" cy="21" r="6.500" fill="#f7f7f7" stroke="#174a66" stroke-width="1.600"/></symbol>
<symbol id="min" viewBox="0 0 32 32"><path d="M8 23h17v4H8z" fill="currentColor"/></symbol>
<symbol id="rest" viewBox="0 0 32 32"><path d="M12 13V3h18v14H21M3 13h18v15H3z" fill="none" stroke="currentColor" stroke-width="2.200"/><path d="M12 4h18M3 14h18" stroke="currentColor" stroke-width="3"/></symbol>
<symbol id="cls" viewBox="0 0 32 32"><path d="M7 7l18 18M25 7L7 25" stroke="currentColor" stroke-width="3.200"/></symbol>
<symbol id="pl" viewBox="0 0 32 32"><path d="M5 2h21v28H5z" fill="none" stroke="currentColor" stroke-width="2.200"/><path d="M5 3h21" stroke="currentColor" stroke-width="3"/><path d="M14 10v14l-8-7z" fill="currentColor"/></symbol>
<symbol id="pr" viewBox="0 0 32 32"><path d="M5 2h21v28H5z" fill="none" stroke="currentColor" stroke-width="2.200"/><path d="M5 3h21" stroke="currentColor" stroke-width="3"/><path d="M17 10v14l8-7z" fill="currentColor"/></symbol>
<symbol id="twr" viewBox="0 0 24 12"><path d="M4 0l7 6-7 6z" fill="#555"/></symbol>
<symbol id="twd" viewBox="0 0 24 12"><path d="M1 2h12l-6 8z" fill="#555"/></symbol>
</defs>
</svg>

<header class="titlebar d-flex align-items-center">
  <svg class="ms-2" width="34" height="34" viewBox="0 0 34 34" role="img" aria-label="DS"><g fill="none" stroke="#da2b23" stroke-width="2.600" stroke-linejoin="round" stroke-linecap="round"><path d="M12 3q10-2 11 2 0 4-9 8"/><path d="M14 13q6 2 3 7-3 6-15 12 1-5 4-13h8"/><path d="M32 15q-8-2-9 2 0 3 4 5 3 3-1 6-3 1-9 1"/></g></svg>
  <div class="brand ms-2 me-5 pt-1 text-nowrap"><b>SOLID</b><span>WORKS</span></div>
  <nav class="menus d-flex pt-1" aria-label="Main menu"><a href="#">File</a><a href="#">Edit</a><a href="#">View</a><a href="#">Insert</a><a href="#">Tools</a><a href="#">Window</a></nav>
  <button class="px-3" aria-label="Pin menu"><svg width="22" height="26"><use href="#pin"/></svg></button>
  <div class="vr1"></div>
  <div class="d-flex align-items-center ms-4 ps-1">
    <button class="qbtn qhome d-grid" aria-label="Home"><svg class="ic m-auto"><use href="#home"/></svg></button>
    <button class="qbtn d-grid" aria-label="New"><svg class="ic m-auto"><use href="#new"/></svg></button><button class="qdrop d-grid" aria-label="New options"><i class="dn m-auto"></i></button>
    <button class="qbtn d-grid" aria-label="Open"><svg class="ic m-auto"><use href="#open"/></svg></button><button class="qdrop d-grid" aria-label="Open options"><i class="dn m-auto"></i></button>
    <button class="qbtn d-grid" aria-label="Save"><svg class="ic m-auto"><use href="#save"/></svg></button><button class="qdrop d-grid" aria-label="Save options"><i class="dn m-auto"></i></button>
    <button class="qbtn d-grid" aria-label="Print"><svg class="ic m-auto"><use href="#print"/></svg></button><button class="qdrop d-grid" aria-label="Print options"><i class="dn m-auto"></i></button>
    <button class="qbtn d-grid" aria-label="Undo"><svg class="ic m-auto"><use href="#undo"/></svg></button><button class="qdrop d-grid" aria-label="Undo options"><i class="dn m-auto"></i></button>
    <button class="qbtn d-grid dim" aria-label="Redo"><svg class="ic m-auto off" viewBox="0 0 30 30"><g transform="translate(30 0) scale(-1 1)"><use href="#undo" width="30" height="30"/></g></svg></button><button class="qdrop qlast d-grid dim" aria-label="Redo options"><i class="dn m-auto"></i></button>
    <div class="pick d-flex"><button class="on d-grid" aria-label="Select"><svg class="ic m-auto"><use href="#cursor"/></svg></button><button class="dd d-grid" aria-label="Select options"><i class="dn m-auto"></i></button></div>
    <div class="d-flex ms-1 gap-2"><button class="qbtn d-grid" aria-label="Rebuild"><svg class="ic m-auto"><use href="#traffic"/></svg></button>
    <button class="qbtn d-grid ms-1" aria-label="File properties"><svg class="ic m-auto"><use href="#list"/></svg></button>
    <button class="qbtn d-grid ms-1" aria-label="Options"><svg class="ic m-auto"><use href="#gear"/></svg></button></div><button class="qdrop d-grid" aria-label="More options"><i class="dn m-auto"></i></button>
  </div>
  <div class="docname mx-auto pt-1 text-nowrap">Sketch5 of Biela 2_8.SLDPRT *</div>
  <div class="find d-flex align-items-center ps-3 me-1">
    <svg width="24" height="24" viewBox="0 0 24 24"><path d="M1 1h22v22H1z" fill="#333" stroke="#777"/><path d="M5 5l7 7-7 6M12 19h7" fill="none" stroke="#fff" stroke-width="2"/></svg>
    <input class="flex-fill ms-2 ps-1" type="text" placeholder="Search Commands" aria-label="Search Commands">
    <button class="me-3" aria-label="Search"><svg width="24" height="24" viewBox="0 0 24 24"><circle cx="10" cy="9" r="8" fill="none" stroke="#888" stroke-width="2.400"/><path d="M15 15l7 7" stroke="#888" stroke-width="3"/></svg></button>
    <button class="me-1 dim" aria-label="Search scope"><i class="dn"></i></button>
  </div>
  <div class="wins d-flex pe-1">
    <button class="wbtn d-grid" aria-label="Account"><svg class="ic m-auto" viewBox="0 0 32 32"><g fill="none" stroke="#444" stroke-width="2.200"><circle cx="16" cy="16" r="14.500"/><circle cx="16" cy="13" r="5.500"/><path d="M7 26q2-8 9-8t9 8"/></g></svg></button>
    <button class="wbtn d-grid" aria-label="Help"><svg class="ic m-auto" viewBox="0 0 32 32"><circle cx="16" cy="16" r="14.500" fill="none" stroke="#444" stroke-width="2.200"/><text x="16" y="24" text-anchor="middle" font-size="23" font-weight="600" fill="#444">?</text></svg></button>
    <button class="wbtn d-grid" aria-label="Minimize"><svg class="ic m-auto"><use href="#min"/></svg></button>
    <button class="wbtn d-grid" aria-label="Restore"><svg class="m-auto" width="26" height="26"><use href="#rest"/></svg></button>
    <button class="wbtn d-grid" aria-label="Close"><svg class="ic m-auto"><use href="#cls"/></svg></button>
  </div>
</header>

<div class="ribbonrow d-flex align-items-start">
  <div class="ribbon d-flex h-100">
    <div class="split w71 d-flex flex-column text-center"><button class="up"><svg class="ic mx-auto mb-0"><use href="#exit"/></svg>Exit<br>Sketch</button><button class="flex-fill d-grid" aria-label="Exit sketch options"><i class="dn m-auto"></i></button></div>
    <button class="big w106 d-block align-self-stretch"><span class="d-flex flex-column align-items-center h-100"><svg class="ic"><use href="#dimn"/></svg>Smart<br>Dimension</span><i class="dn"></i></button>
    <div class="vr1"></div>
    <div class="tools">
      <button aria-label="Line"><svg class="ic"><use href="#ln"/></svg></button><button aria-label="Line types"><i class="dn"></i></button><button aria-label="Circle"><svg class="ic"><use href="#circ"/></svg></button><button aria-label="Circle types"><i class="dn"></i></button><button aria-label="Spline"><svg class="ic"><use href="#spl"/></svg></button><button aria-label="Spline types"><i class="dn"></i></button><button aria-label="Plane"><svg class="ic"><use href="#pdash"/></svg></button>
      <button aria-label="Rectangle"><svg class="ic"><use href="#rct"/></svg></button><button aria-label="Rectangle types"><i class="dn"></i></button><button aria-label="Arc"><svg class="ic"><use href="#arc"/></svg></button><button aria-label="Arc types"><i class="dn"></i></button><button aria-label="Ellipse"><svg class="ic"><use href="#ell"/></svg></button><button aria-label="Ellipse types"><i class="dn"></i></button><button aria-label="Text"><svg class="ic"><use href="#txt"/></svg></button>
      <button aria-label="Slot"><svg class="ic"><use href="#slot"/></svg></button><button aria-label="Slot types"><i class="dn"></i></button><button aria-label="Polygon"><svg class="ic"><use href="#poly"/></svg></button><span></span><button aria-label="Fillet"><svg class="ic"><use href="#fil"/></svg></button><button aria-label="Fillet types"><i class="dn"></i></button><button aria-label="Point"><svg class="ic"><use href="#pnt"/></svg></button>
    </div>
    <div class="vr1"></div>
    <button class="big w79"><span class="d-flex flex-column align-items-center h-100"><svg class="ic"><use href="#trim"/></svg><span><u>T</u>rim</span>Entities</span><i class="dn"></i></button>
    <button class="big w79"><span class="d-flex flex-column align-items-center h-100"><svg class="ic"><use href="#conv"/></svg>Convert<br>Entities</span><i class="dn"></i></button>
    <button class="big w79"><span class="d-flex flex-column align-items-center h-100"><svg class="ic"><use href="#offs"/></svg>Offset<br>Entities</span></button>
    <button class="big w74 dim" disabled><span class="d-flex flex-column align-items-center h-100"><svg class="ic"><use href="#osrf"/></svg><span>Offset<br>On<br>Surface</span></span></button>
    <div class="ents d-flex flex-column">
      <button class="d-flex align-items-center"><svg class="ic"><use href="#mir"/></svg>Mirror Entities</button>
      <button class="d-flex align-items-center"><svg class="ic"><use href="#pat"/></svg>Linear Sketch Pattern<i class="dn ms-auto"></i></button>
      <button class="d-flex align-items-center"><svg class="ic"><use href="#mov"/></svg>Move Entities<i class="dn ms-auto"></i></button>
    </div>
    <div class="vr1"></div>
    <button class="big w137"><span class="d-flex flex-column align-items-center h-100"><svg class="ic"><use href="#rel"/></svg>Display/Delete<br>Relations</span><i class="dn"></i></button>
    <button class="big w71"><span class="d-flex flex-column align-items-center h-100"><svg class="ic"><use href="#rep"/></svg>Repair<br>Sketch</span></button>
    <div class="vr1"></div>
    <button class="big w69 dim" disabled><span class="d-flex flex-column align-items-center h-100"><svg class="ic"><use href="#snap"/></svg>Quick<br>Snaps</span><i class="dn"></i></button>
    <div class="vr1"></div>
    <button class="big w74"><span class="d-flex flex-column align-items-center h-100"><svg class="ic"><use href="#rap"/></svg>Rapid<br>Sketch</span></button>
    <button class="big w93"><span class="d-flex flex-column align-items-center h-100"><svg class="ic"><use href="#ins"/></svg>Instant2D</span></button>
    <button class="big w93 pressed"><span class="d-flex flex-column align-items-center h-100"><svg class="ic"><use href="#shd"/></svg><span>Shaded<br>Sketch<br>Contours</span></span></button>
    <button class="ms-auto align-self-end me-2 mb-2 p-1" aria-label="Collapse ribbon"><svg width="16" height="12" viewBox="0 0 16 12"><path d="M2 11l6-8 6 8" fill="none" stroke="#444" stroke-width="3"/></svg></button>
  </div>
  <div class="viewbar ms-auto d-flex align-items-center">
    <div class="grip me-3"></div>
    <div class="d-flex justify-content-between flex-fill">
      <button aria-label="Front"><svg class="ic" viewBox="0 0 32 32"><path d="M11 9h19v21H11z" fill="#e9e9e9"/><use href="#cubew" width="32" height="32"/></svg></button>
      <button aria-label="Top"><svg class="ic" viewBox="0 0 32 32"><path d="M2 2h19l9 7H11z" fill="#ccc"/><use href="#cubew" width="32" height="32"/></svg></button>
      <button aria-label="Right"><svg class="ic" viewBox="0 0 32 32"><path d="M21 2l9 7v21l-9-8z" fill="#ccc"/><use href="#cubew" width="32" height="32"/></svg></button>
      <button aria-label="Left"><svg class="ic" viewBox="0 0 32 32"><path d="M2 2l9 7v21l-9-8z" fill="#ccc"/><use href="#cubew" width="32" height="32"/></svg></button>
      <button aria-label="Bottom"><svg class="ic" viewBox="0 0 32 32"><path d="M2 22h19l9 8H11z" fill="#ccc"/><use href="#cubew" width="32" height="32"/></svg></button>
      <button aria-label="Back"><svg class="ic" viewBox="0 0 32 32"><path d="M3 3h18v19H3z" fill="none" stroke="#bbb" stroke-width="3"/><use href="#cubew" width="32" height="32"/></svg></button>
      <button aria-label="Isometric"><svg class="ic" viewBox="0 0 32 32"><use href="#cubew" width="32" height="32"/><path d="M11 3l7 8-7 8-7-8z" fill="#f7f7f7" stroke="#bbb" stroke-width="3"/></svg></button>
    </div>
    <div class="vr1 my-2 ms-2 me-3"></div>
    <div class="skgroup d-flex justify-content-between">
      <button aria-label="Sketch"><svg class="ic"><use href="#newsk"/></svg></button><button aria-label="Repair"><svg class="ic"><use href="#rep"/></svg></button><button aria-label="Modify"><svg class="ic"><use href="#sk2"/></svg></button><button aria-label="Copy"><svg class="ic"><use href="#stk"/></svg></button><button aria-label="Derived"><svg class="ic"><use href="#stk2"/></svg></button>
    </div>
  </div>
</div>

<main class="d-flex flex-fill">
  <aside class="side d-flex flex-column flex-shrink-0 position-relative">
    <div class="cmtabs d-flex">
      <button class="t94">Features</button><button class="cur t88">Sketch</button><button class="t93">Surfaces</button><button class="t88">Markup</button><button class="t93">Evaluate</button><button class="t163">MBD Dimensions</button><button class="t204">SOLIDWORKS Add-Ins</button>
    </div>
    <div class="panel d-flex flex-column flex-fill">
      <div class="ptop d-flex"><div class="knob mx-auto mt-3"></div></div>
      <div class="ptabs d-flex">
        <button class="pt cur d-grid" aria-label="Feature tree"><svg class="ic m-auto"><use href="#part"/></svg></button>
        <button class="pt d-grid" aria-label="Properties"><svg class="ic m-auto"><use href="#prop"/></svg></button>
        <button class="pt d-grid" aria-label="Configurations"><svg class="ic m-auto"><use href="#cfg"/></svg></button>
        <button class="pt d-grid" aria-label="Dimensions"><svg class="ic m-auto"><use href="#targ"/></svg></button>
        <button class="pt d-grid" aria-label="Appearances"><svg class="ic m-auto" viewBox="0 0 32 32"><use href="#ball" width="32" height="32"/><ellipse cx="21" cy="9" rx="4" ry="7" transform="rotate(-35 21 9)" fill="#222"/></svg></button>
        <button class="ms-auto me-2" aria-label="More tabs"><svg width="14" height="20" viewBox="0 0 14 20"><path d="M3 2l8 8-8 8" fill="none" stroke="#444" stroke-width="3.400"/></svg></button>
      </div>
      <div class="tbody1 flex-fill">
        <div class="filter d-flex align-items-center"><svg class="ic28"><use href="#fun"/></svg><input class="flex-fill" type="text" aria-label="Filter"></div>
        <ul class="tree list-unstyled">
          <li class="root"><svg class="ic28"><use href="#part"/></svg>Biela 2_8  (Default&lt;&lt;Default&gt;_Display State 1&gt;)</li>
          <li><svg class="tw"><use href="#twr"/></svg><svg class="ic28"><use href="#hist"/></svg>History</li>
          <li><span class="tw"></span><svg class="ic28"><use href="#sens"/></svg>Sensors</li>
          <li><svg class="tw"><use href="#twr"/></svg><svg class="ic28"><use href="#anno"/></svg>Annotations</li>
          <li><svg class="tw"><use href="#twr"/></svg><svg class="ic28"><use href="#sol"/></svg>Solid Bodies(1)</li>
          <li><span class="tw"></span><svg class="ic28"><use href="#matl"/></svg>Material &lt;not specified&gt;</li>
          <li><span class="tw"></span><svg class="ic28"><use href="#pln"/></svg>Front Plane</li>
          <li><span class="tw"></span><svg class="ic28"><use href="#pln"/></svg>Top Plane</li>
          <li><span class="tw"></span><svg class="ic28"><use href="#pln"/></svg>Right Plane</li>
          <li><span class="tw"></span><svg class="ic28"><use href="#orig"/></svg>Origin</li>
          <li><span class="tw"></span><svg class="ic28"><use href="#pln"/></svg>Plane1</li>
          <li><span class="tw"></span><svg class="ic28"><use href="#axis"/></svg>Axis4</li>
          <li><span class="tw"></span><svg class="ic28"><use href="#axis"/></svg>Axis5</li>
          <li><span class="tw"></span><svg class="ic28"><use href="#pt1"/></svg>Point1</li>
          <li><svg class="tw"><use href="#twr"/></svg><svg class="ic28"><use href="#boss"/></svg>Boss-Extrude1</li>
          <li><svg class="tw"><use href="#twr"/></svg><svg class="ic28"><use href="#cut"/></svg>Cut-Extrude1</li>
          <li><svg class="tw"><use href="#twr"/></svg><svg class="ic28"><use href="#boss"/></svg>Boss-Extrude2</li>
          <li><svg class="tw"><use href="#twr"/></svg><svg class="ic28"><use href="#cut"/></svg>Cut-Extrude2</li>
          <li><svg class="tw"><use href="#twr"/></svg><svg class="ic28"><use href="#cut"/></svg>Cut-Extrude3</li>
          <li class="gone"><svg class="tw"><use href="#twd"/></svg><svg class="ic28 off"><use href="#boss"/></svg>Boss-Extrude3</li>
          <li class="kid"><svg class="ic28"><use href="#skt"/></svg>(-) Sketch5</li>
          <li class="gone"><span class="tw"></span><svg class="ic28 off"><use href="#cham"/></svg>Chamfer1</li>
          <li class="gone"><span class="tw"></span><svg class="ic28 off"><use href="#cham"/></svg>Chamfer2</li>
          <li class="gone"><svg class="tw"><use href="#twr"/></svg><svg class="ic28 off"><use href="#cut"/></svg>Cut-Extrude4</li>
        </ul>
      </div>
      <div class="pfoot"></div>
    </div>
  </aside>

  <section class="stage flex-fill position-relative">
    <svg class="scene" viewBox="585 214 3651 2046" preserveAspectRatio="xMidYMid slice">
      <rect x="861" y="1212" width="466" height="942" fill="url(#gl)" stroke="#000" stroke-width="2"/>
      <rect x="3208" y="1212" width="464" height="942" fill="url(#gr)" stroke="#000" stroke-width="2"/>
      <rect x="1327" y="273" width="1881" height="1881" fill="#8c8ea1" stroke="#000" stroke-width="2.500"/>
      <path d="M2267 764L2371 824 2494 826 2553 929 2657 989V1110L2716 1214 2657 1317V1435L2551 1496 2489 1601 2370 1601 2267 1660 2162 1599 2041 1597 1982 1496 1879 1435V1315L1820 1208 1879 1107V988L1983 928 2045 823 2165 823z" fill="#9ea182"/>
      <circle cx="2267.500" cy="1211.500" r="388" fill="none" stroke="#000" stroke-width="2.200" stroke-dasharray="84 6 8 6" stroke-dashoffset="76"/>
      <path d="M2267 517V2262" stroke="#00f" stroke-width="4" stroke-dasharray="5 10 14.500 10"/>
      <g fill="none" stroke-width="3.400" stroke-linejoin="round">
        <path stroke="#000" d="M2165 823L2267 764 2371 824M2553 929L2657 989V1110M2657 1317V1435L2551 1496M2370 1601L2267 1660 2162 1599M1982 1496L1879 1435V1315M1879 1107V988L1983 928"/>
        <path stroke="#00f" d="M2371 824L2494 826 2553 929M2657 1110L2716 1214 2657 1317M2551 1496L2489 1601 2370 1601M2162 1599L2041 1597 1982 1496M1879 1315L1820 1208 1879 1107M1983 928L2045 823 2165 823"/>
      </g>
      <g fill="none" stroke-linecap="round" stroke-width="9">
        <path stroke="#000" d="M2267 764h.01M2657 989h.01M2657 1435h.01M2267 1660h.01M1879 1435h.01M1879 988h.01"/>
        <path stroke="#00f" d="M2371 824h.01M2494 826h.01M2553 929h.01M2657 1110h.01M2716 1214h.01M2657 1317h.01M2551 1496h.01M2489 1601h.01M2370 1601h.01M2162 1599h.01M2041 1597h.01M1982 1496h.01M1879 1315h.01M1820 1208h.01M1879 1107h.01M1983 928h.01M2045 823h.01M2165 823h.01"/>
      </g>
      <g stroke="#000" stroke-width="1.800" fill="none"><path d="M1809 929V1495M1801 988h69M1801 1435h69M1658 1182L1687 1132 1914 745 1944 695M1906 741L2037 817M1679 1127L1810 1203"/></g>
      <path d="M1809 988l-6-32h12zM1809 1435l-6 32h12zM1914 745l10-30 10 6zM1687 1132l-10 30-10-6z"/>
      <g font-family="Lato,sans-serif" font-size="30" text-anchor="middle" fill="#000">
        <text transform="translate(1802 1127) rotate(-90)">4.77</text>
        <text transform="translate(1847 845) rotate(-59.600)">4.77</text>
      </g>
      <g stroke="#f00" stroke-width="2"><path d="M2267 1211V1165M2267 1211.500h20"/></g>
      <path d="M2267 1153l5 17h-10zM2298 1211.500l-17-4.500v9z" fill="#f00"/>
      <path d="M2267 1165v13M2267 1189v5M2261 1212h12M2267 1206v12" stroke="#00f" stroke-width="4"/>
      <g font-family="Lato,sans-serif" font-size="28" fill="#1414e6"><text x="2269" y="1206">Point1</text><text x="2269" y="1206">Axis5</text></g>
      <path d="M659 2157V2115" stroke="#8f8" stroke-width="6"/><path d="M659 2104l7 16h-14z" fill="#0a0"/><path d="M659 2150v10" stroke="#0a0" stroke-width="6"/>
      <path d="M659 2158h40" stroke="#00009c" stroke-width="7"/><path d="M711 2158l-14-7v14z" fill="#00009c"/>
      <text x="655" y="2093" font-size="14" fill="#0f0">Y</text><text x="719" y="2158" font-size="14" fill="#00f">Z</text>
    </svg>
    <div class="hud d-flex justify-content-center">
      <button aria-label="Zoom to fit" class="me-2"><svg class="ic me-1"><use href="#zfit"/></svg></button><button aria-label="Zoom to area" class="me-2"><svg class="ic me-1"><use href="#zarea"/></svg></button><button aria-label="Previous view" class="me-2"><svg class="ic me-1"><use href="#prev"/></svg></button><button aria-label="Section view" class="me-2"><svg class="ic me-1"><use href="#sect"/></svg></button><button aria-label="Dynamic annotation" class="me-2"><svg class="ic"><use href="#dyn"/></svg></button>
      <button aria-label="View orientation"><svg class="ic"><use href="#orient"/></svg></button><button class="hd d-grid" aria-label="Orientation list"><i class="dn m-auto"></i></button>
      <button aria-label="Display style"><svg class="ic"><use href="#disp"/></svg></button><button class="hd d-grid" aria-label="Style list"><i class="dn m-auto"></i></button>
      <button aria-label="Hide or show"><svg class="ic"><use href="#eye"/></svg></button><button class="hd d-grid" aria-label="Visibility list"><i class="dn m-auto"></i></button>
      <button aria-label="Edit appearance" class="me-2"><svg class="ic"><use href="#appr"/></svg></button><button aria-label="Apply scene"><svg class="ic"><use href="#scn"/></svg></button><button class="hd d-grid" aria-label="Scene list"><i class="dn m-auto"></i></button>
      <button aria-label="View settings"><svg class="ic"><use href="#mon"/></svg></button><button class="hd d-grid" aria-label="Settings list"><i class="dn m-auto"></i></button>
    </div>
    <div class="docbtns d-flex">
      <button aria-label="Expand left"><svg class="ic p-1"><use href="#pl"/></svg></button><button aria-label="Expand right"><svg class="ic p-1"><use href="#pr"/></svg></button><button aria-label="Minimize document"><svg class="ic"><use href="#min"/></svg></button><button aria-label="Restore document"><svg class="ic p-1"><use href="#rest"/></svg></button><button aria-label="Close document"><svg class="ic"><use href="#cls"/></svg></button>
    </div>
    <svg class="corner" width="114" height="88" viewBox="0 0 114 88"><path d="M36 3H3v26q0 22 20 22h14" fill="none" stroke="#c3d5e3" stroke-width="4"/><path d="M72 30q-1 24-22 23v14L37 51l13-17v11q12 0 22-15z" fill="#cfe0ea" stroke="#aac3d2" stroke-width="2"/><path d="M82 57l22 24M104 57L82 81" stroke="#dcaeb2" stroke-width="14" stroke-linecap="round"/><path d="M82 57l22 24M104 57L82 81" stroke="#e9c2c5" stroke-width="10" stroke-linecap="round"/></svg>
    <div class="taskpane d-flex flex-column">
      <button class="d-grid" aria-label="3DEXPERIENCE"><svg class="ic m-auto"><use href="#expr"/></svg></button><button class="d-grid" aria-label="Resources"><svg class="ic m-auto"><use href="#home"/></svg></button><button class="d-grid" aria-label="Design library"><svg class="ic m-auto"><use href="#books"/></svg></button><button class="d-grid" aria-label="File explorer"><svg class="ic m-auto"><use href="#fold"/></svg></button><button class="d-grid" aria-label="View palette"><svg class="ic28 m-auto"><use href="#pal"/></svg></button><button class="d-grid" aria-label="Appearances and scenes"><svg class="ic28 m-auto"><use href="#ball"/></svg></button><button class="d-grid" aria-label="Custom properties"><svg class="ic m-auto"><use href="#prop"/></svg></button>
    </div>
    <button class="pull d-grid" aria-label="Collapse panel"><i class="knob m-auto"></i></button>
  </section>
</main>

<div class="btabs d-flex">
  <div class="vcr d-flex">
    <button class="d-grid" aria-label="First"><svg class="m-auto" width="14" height="16"><path d="M3 1v14M12 1v14L5 8z" fill="#7f8186" stroke="#7f8186"/></svg></button><button class="d-grid" aria-label="Previous"><svg class="m-auto" width="14" height="16"><path d="M11 1v14L4 8z" fill="#7f8186"/></svg></button><button class="d-grid" aria-label="Next"><svg class="m-auto" width="14" height="16"><path d="M3 1v14l7-7z" fill="#7f8186"/></svg></button><button class="d-grid" aria-label="Last"><svg class="m-auto" width="14" height="16"><path d="M11 1v14M2 1v14l7-7z" fill="#7f8186" stroke="#7f8186"/></svg></button>
  </div>
  <button class="bt cur t88">Model</button><button class="bt b100 ps-2"><span class="ps-1">3D Views</span></button><button class="bt b164 ps-2"><span class="ps-1">Motion Study 1</span></button>
</div>
<footer class="status d-flex">
  <span>SOLIDWORKS Premium 2021 SP4.1</span>
  <span class="ms-auto s127">13.1mm</span><span class="s105">3.56mm</span><span class="w74">0mm</span><span class="s162">Under Defined</span><span class="s325">Editing Sketch5</span><span class="s80">MMGS</span>
  <button class="qdrop d-grid h-100" aria-label="Unit system"><svg class="m-auto" width="10" height="8"><path d="M0 8h10L5 0z" fill="#333"/></svg></button>
  <button class="ms-3 me-1" aria-label="Tags"><svg class="ic28" viewBox="0 0 32 32"><path d="M3 4l12-3 15 14-2 8-9 8L3 17z" fill="#ddd" stroke="#333" stroke-width="2"/><path d="M3 10l17 15 9-10M3 14l16 14" fill="none" stroke="#333" stroke-width="1.600"/><circle cx="13" cy="8" r="3" fill="#fff" stroke="#333" stroke-width="1.600"/></svg></button>
</footer>
<script src="https://cdn.jsdelivr.net/npm/bootstrap@5.3.0/dist/js/bootstrap.bundle.min.js"></script>
</body>
</html>
